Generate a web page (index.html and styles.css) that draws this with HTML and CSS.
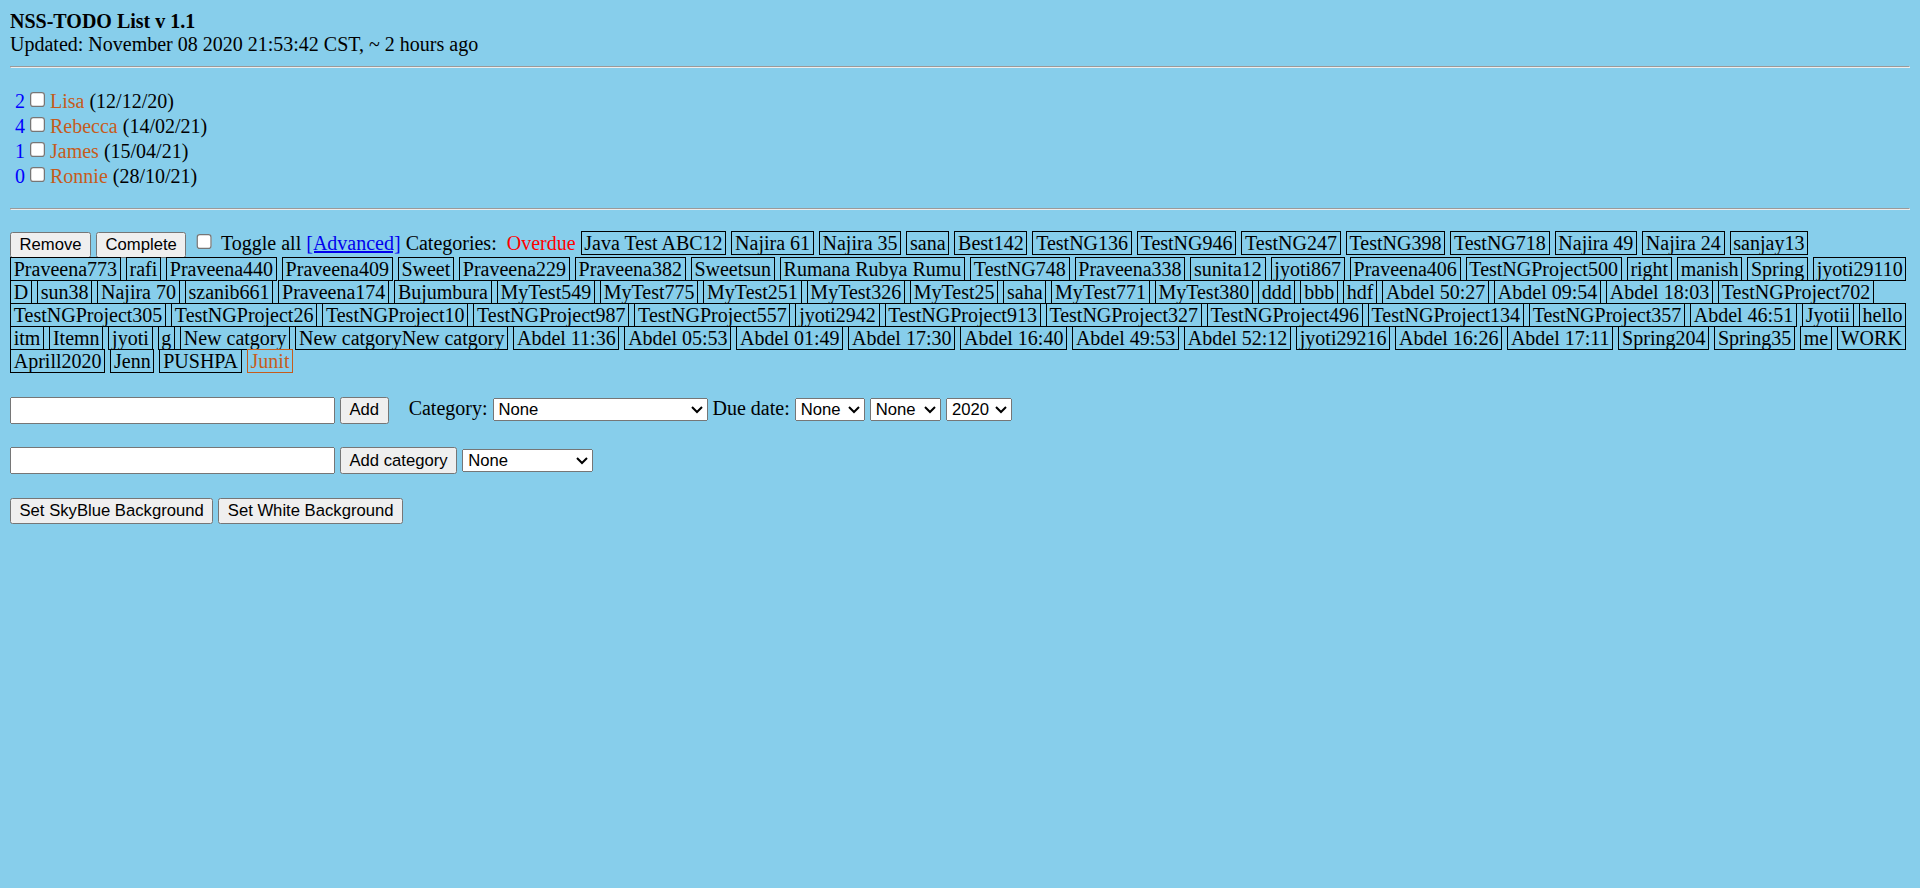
FILE: index.html
```html
<!DOCTYPE html>
<html>
<head>
<meta charset="utf-8">
<title>NSS-TODO List</title>
<link rel="stylesheet" href="styles.css">
</head>
<body>
<div class="header"><b>NSS-TODO List v 1.1</b><br>Updated: November 08 2020 21:53:42 CST, ~ 2 hours ago</div>
<hr>
<form class="todo-form">
<p class="todo-list">
<span class="num">&nbsp;2</span><input type="checkbox"><span class="name">Lisa</span> (12/12/20)<br>
<span class="num">&nbsp;4</span><input type="checkbox"><span class="name">Rebecca</span> (14/02/21)<br>
<span class="num">&nbsp;1</span><input type="checkbox"><span class="name">James</span> (15/04/21)<br>
<span class="num">&nbsp;0</span><input type="checkbox"><span class="name">Ronnie</span> (28/10/21)
</p>
<hr>
<p class="toolbar">
<button type="button" class="btn">Remove</button> <button type="button" class="btn">Complete</button> <input type="checkbox"> Toggle all <a href="#" class="adv">[Advanced]</a> Categories: &nbsp;<span class="overdue">Overdue</span> <span class="cat">Java Test ABC12</span> <span class="cat">Najira 61</span> <span class="cat">Najira 35</span> <span class="cat">sana</span> <span class="cat">Best142</span> <span class="cat">TestNG136</span> <span class="cat">TestNG946</span> <span class="cat">TestNG247</span> <span class="cat">TestNG398</span> <span class="cat">TestNG718</span> <span class="cat">Najira 49</span> <span class="cat">Najira 24</span> <span class="cat">sanjay13</span> <span class="cat">Praveena773</span> <span class="cat">rafi</span> <span class="cat">Praveena440</span> <span class="cat">Praveena409</span> <span class="cat">Sweet</span> <span class="cat">Praveena229</span> <span class="cat">Praveena382</span> <span class="cat">Sweetsun</span> <span class="cat">Rumana Rubya Rumu</span> <span class="cat">TestNG748</span> <span class="cat">Praveena338</span> <span class="cat">sunita12</span> <span class="cat">jyoti867</span> <span class="cat">Praveena406</span> <span class="cat">TestNGProject500</span> <span class="cat">right</span> <span class="cat">manish</span> <span class="cat">Spring</span> <span class="cat">jyoti29110</span> <span class="cat">D</span> <span class="cat">sun38</span> <span class="cat">Najira 70</span> <span class="cat">szanib661</span> <span class="cat">Praveena174</span> <span class="cat">Bujumbura</span> <span class="cat">MyTest549</span> <span class="cat">MyTest775</span> <span class="cat">MyTest251</span> <span class="cat">MyTest326</span> <span class="cat">MyTest25</span> <span class="cat">saha</span> <span class="cat">MyTest771</span> <span class="cat">MyTest380</span> <span class="cat">ddd</span> <span class="cat">bbb</span> <span class="cat">hdf</span> <span class="cat">Abdel 50:27</span> <span class="cat">Abdel 09:54</span> <span class="cat">Abdel 18:03</span> <span class="cat">TestNGProject702</span> <span class="cat">TestNGProject305</span> <span class="cat">TestNGProject26</span> <span class="cat">TestNGProject10</span> <span class="cat">TestNGProject987</span> <span class="cat">TestNGProject557</span> <span class="cat">jyoti2942</span> <span class="cat">TestNGProject913</span> <span class="cat">TestNGProject327</span> <span class="cat">TestNGProject496</span> <span class="cat">TestNGProject134</span> <span class="cat">TestNGProject357</span> <span class="cat">Abdel 46:51</span> <span class="cat">Jyotii</span> <span class="cat">hello</span> <span class="cat">itm</span> <span class="cat">Itemn</span> <span class="cat">jyoti</span> <span class="cat">g</span> <span class="cat">New catgory</span> <span class="cat">New catgoryNew catgory</span> <span class="cat">Abdel 11:36</span> <span class="cat">Abdel 05:53</span> <span class="cat">Abdel 01:49</span> <span class="cat">Abdel 17:30</span> <span class="cat">Abdel 16:40</span> <span class="cat">Abdel 49:53</span> <span class="cat">Abdel 52:12</span> <span class="cat">jyoti29216</span> <span class="cat">Abdel 16:26</span> <span class="cat">Abdel 17:11</span> <span class="cat">Spring204</span> <span class="cat">Spring35</span> <span class="cat">me</span> <span class="cat">WORK</span> <span class="cat">Aprill2020</span> <span class="cat">Jenn</span> <span class="cat">PUSHPA</span> <span class="cat cat-active">Junit</span>
</p>
<p class="row">
<input type="text" class="text-input"> <button type="button" class="btn">Add</button> &nbsp;&nbsp; Category: <select class="sel sel-cat"><option>None</option></select> Due date: <select class="sel sel-day"><option>None</option></select> <select class="sel sel-month"><option>None</option></select> <select class="sel sel-year"><option>2020</option></select>
</p>
<p class="row">
<input type="text" class="text-input"> <button type="button" class="btn">Add category</button> <select class="sel sel-parent"><option>None</option></select>
</p>
<p class="row">
<button type="button" class="btn">Set SkyBlue Background</button> <button type="button" class="btn">Set White Background</button>
</p>
</form>
</body>
</html>
```
FILE: styles.css
```css
html {
  zoom: 1.25;
  background: #87ceeb;
}
body {
  margin: 8px;
  background: #87ceeb;
  color: #000;
  font-family: "Liberation Serif", "Times New Roman", serif;
  font-size: 16px;
}
.todo-form {
  margin: 0;
}
.todo-list {
  margin: 16px 0;
}
.num {
  color: #0000ff;
}
.name {
  color: #c65c1c;
}
.toolbar {
  margin: 16px 0 0;
}
.btn,
.text-input,
.sel {
  font-family: "Liberation Sans", Arial, sans-serif;
  font-size: 13.333px;
}
.adv {
  color: #0000ee;
}
.overdue {
  color: #ff0000;
}
.cat {
  border: 1px solid #000;
  padding: 0 2.2px;
  white-space: nowrap;
}
.cat-active {
  border-color: #c65c1c;
  color: #c65c1c;
}
.row {
  margin: 19px 0 0;
}
.text-input {
  box-sizing: border-box;
  width: 260px;
}
.sel-cat {
  width: 172px;
}
.sel-day {
  width: 56px;
}
.sel-month {
  width: 57px;
}
.sel-year {
  width: 53px;
}
.sel-parent {
  width: 105px;
}
```
